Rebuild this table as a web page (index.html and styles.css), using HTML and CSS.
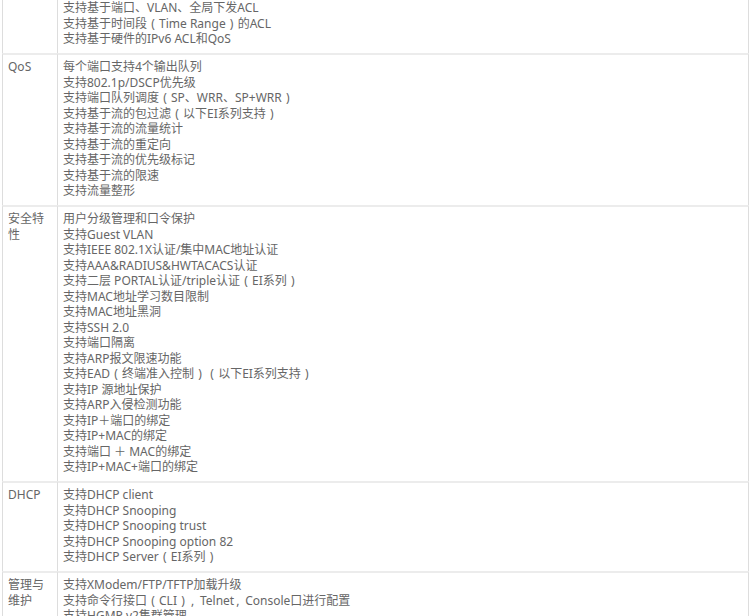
FILE: index.html
```html
<!DOCTYPE html>
<html lang="zh-CN">
<head>
<meta charset="utf-8">
<title>规格</title>
<link rel="stylesheet" href="styles.css">
</head>
<body>
<table class="spec">
  <colgroup><col class="c-label"><col class="c-val"></colgroup>
  <tbody>
    <tr>
      <td class="label"></td>
      <td class="val">支持基于端口、VLAN、全局下发ACL<br>支持基于时间段<span class="fp">(</span>Time Range<span class="fp">)</span>的ACL<br>支持基于硬件的IPv6 ACL和QoS</td>
    </tr>
    <tr>
      <td class="label">QoS</td>
      <td class="val">每个端口支持4个输出队列<br>支持802.1p/DSCP优先级<br>支持端口队列调度<span class="fp">(</span>SP、WRR、SP+WRR<span class="fp">)</span><br>支持基于流的包过滤<span class="fp">(</span>以下EI系列支持<span class="fp">)</span><br>支持基于流的流量统计<br>支持基于流的重定向<br>支持基于流的优先级标记<br>支持基于流的限速<br>支持流量整形</td>
    </tr>
    <tr>
      <td class="label">安全特性</td>
      <td class="val">用户分级管理和口令保护<br>支持Guest VLAN<br>支持IEEE 802.1X认证/集中MAC地址认证<br>支持AAA&amp;RADIUS&amp;HWTACACS认证<br>支持二层 PORTAL认证/triple认证<span class="fp">(</span>EI系列<span class="fp">)</span><br>支持MAC地址学习数目限制<br>支持MAC地址黑洞<br>支持SSH 2.0<br>支持端口隔离<br>支持ARP报文限速功能<br>支持EAD<span class="fp">(</span>终端准入控制<span class="fp">)</span><span class="fp">(</span>以下EI系列支持<span class="fp">)</span><br>支持IP 源地址保护<br>支持ARP入侵检测功能<br>支持IP＋端口的绑定<br>支持IP+MAC的绑定<br>支持端口 ＋ MAC的绑定<br>支持IP+MAC+端口的绑定</td>
    </tr>
    <tr>
      <td class="label">DHCP</td>
      <td class="val">支持DHCP client<br>支持DHCP Snooping<br>支持DHCP Snooping trust<br>支持DHCP Snooping option 82<br>支持DHCP Server<span class="fp">(</span>EI系列<span class="fp">)</span></td>
    </tr>
    <tr>
      <td class="label">管理与维护</td>
      <td class="val">支持XModem/FTP/TFTP加载升级<br>支持命令行接口<span class="fp">(</span>CLI<span class="fp">)</span><span class="fc">,</span>Telnet<span class="fc">,</span>Console口进行配置<br>支持HGMP v2集群管理</td>
    </tr>
  </tbody>
</table>
</body>
</html>
```
FILE: styles.css
```css
html, body {
  margin: 0;
  padding: 0;
  background: #ffffff;
}

body {
  overflow: hidden;
}

.spec {
  margin: -6px 0 0 2px;
  width: 747px;
  border-collapse: separate;
  border-spacing: 0;
  table-layout: fixed;
  font-family: "Noto Sans", "Noto Sans CJK SC", sans-serif;
  font-size: 12px;
  line-height: 15.5px;
  color: #666666;
}

.c-label {
  width: 55px;
}

.spec td {
  vertical-align: top;
  border-top: 2px solid #ececec;
  border-left: 1px solid #dddddd;
  padding: 4px 5px 6.5px 5px;
}

.spec td.val {
  border-right: 1px solid #dddddd;
}

.fp {
  display: inline-block;
  width: 12px;
  text-align: center;
}

.fc {
  display: inline-block;
  width: 11px;
  text-align: left;
  padding-left: 2px;
  box-sizing: border-box;
}
```
